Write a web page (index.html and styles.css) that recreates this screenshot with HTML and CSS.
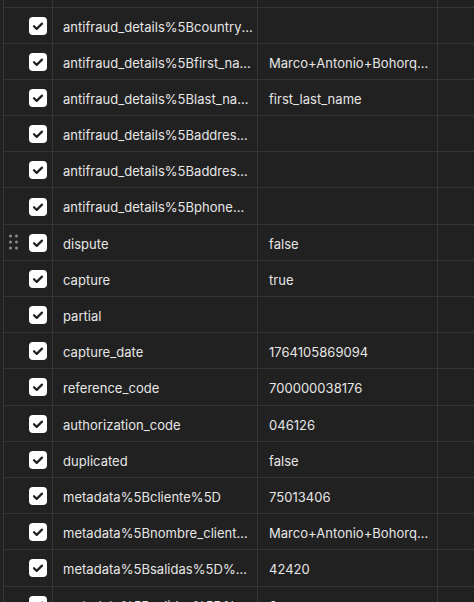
FILE: index.html
```html
<!DOCTYPE html>
<html>
<head>
<meta charset="utf-8">
<link rel="stylesheet" href="styles.css">
</head>
<body>
<div class="viewport">
  <div class="table">
    <div class="row"><div class="cell c-check"><span class="cb"><svg viewBox="0 0 18 18"><path d="M5 9.2l2.7 2.7L13 6.6" /></svg></span></div><div class="cell c-key"></div><div class="cell c-val"></div><div class="cell c-desc"></div></div>
    <div class="row"><div class="cell c-check"><span class="cb"><svg viewBox="0 0 18 18"><path d="M5 9.2l2.7 2.7L13 6.6" /></svg></span></div><div class="cell c-key">antifraud_details%5Bcountry%5D</div><div class="cell c-val"></div><div class="cell c-desc"></div></div>
    <div class="row"><div class="cell c-check"><span class="cb"><svg viewBox="0 0 18 18"><path d="M5 9.2l2.7 2.7L13 6.6" /></svg></span></div><div class="cell c-key">antifraud_details%5Bfirst_name%5D</div><div class="cell c-val">Marco+Antonio+Bohorquez</div><div class="cell c-desc"></div></div>
    <div class="row"><div class="cell c-check"><span class="cb"><svg viewBox="0 0 18 18"><path d="M5 9.2l2.7 2.7L13 6.6" /></svg></span></div><div class="cell c-key">antifraud_details%5Blast_name%5D</div><div class="cell c-val">first_last_name</div><div class="cell c-desc"></div></div>
    <div class="row"><div class="cell c-check"><span class="cb"><svg viewBox="0 0 18 18"><path d="M5 9.2l2.7 2.7L13 6.6" /></svg></span></div><div class="cell c-key">antifraud_details%5Baddress%5D</div><div class="cell c-val"></div><div class="cell c-desc"></div></div>
    <div class="row"><div class="cell c-check"><span class="cb"><svg viewBox="0 0 18 18"><path d="M5 9.2l2.7 2.7L13 6.6" /></svg></span></div><div class="cell c-key">antifraud_details%5Baddress2%5D</div><div class="cell c-val"></div><div class="cell c-desc"></div></div>
    <div class="row"><div class="cell c-check"><span class="cb"><svg viewBox="0 0 18 18"><path d="M5 9.2l2.7 2.7L13 6.6" /></svg></span></div><div class="cell c-key">antifraud_details%5Bphone%5D</div><div class="cell c-val"></div><div class="cell c-desc"></div></div>
    <div class="row"><div class="cell c-check"><span class="drag"><i></i><i></i><i></i><i></i><i></i><i></i></span><span class="cb"><svg viewBox="0 0 18 18"><path d="M5 9.2l2.7 2.7L13 6.6" /></svg></span></div><div class="cell c-key">dispute</div><div class="cell c-val">false</div><div class="cell c-desc"></div></div>
    <div class="row"><div class="cell c-check"><span class="cb"><svg viewBox="0 0 18 18"><path d="M5 9.2l2.7 2.7L13 6.6" /></svg></span></div><div class="cell c-key">capture</div><div class="cell c-val">true</div><div class="cell c-desc"></div></div>
    <div class="row"><div class="cell c-check"><span class="cb"><svg viewBox="0 0 18 18"><path d="M5 9.2l2.7 2.7L13 6.6" /></svg></span></div><div class="cell c-key">partial</div><div class="cell c-val"></div><div class="cell c-desc"></div></div>
    <div class="row"><div class="cell c-check"><span class="cb"><svg viewBox="0 0 18 18"><path d="M5 9.2l2.7 2.7L13 6.6" /></svg></span></div><div class="cell c-key">capture_date</div><div class="cell c-val">1764105869094</div><div class="cell c-desc"></div></div>
    <div class="row"><div class="cell c-check"><span class="cb"><svg viewBox="0 0 18 18"><path d="M5 9.2l2.7 2.7L13 6.6" /></svg></span></div><div class="cell c-key">reference_code</div><div class="cell c-val">700000038176</div><div class="cell c-desc"></div></div>
    <div class="row"><div class="cell c-check"><span class="cb"><svg viewBox="0 0 18 18"><path d="M5 9.2l2.7 2.7L13 6.6" /></svg></span></div><div class="cell c-key">authorization_code</div><div class="cell c-val">046126</div><div class="cell c-desc"></div></div>
    <div class="row"><div class="cell c-check"><span class="cb"><svg viewBox="0 0 18 18"><path d="M5 9.2l2.7 2.7L13 6.6" /></svg></span></div><div class="cell c-key">duplicated</div><div class="cell c-val">false</div><div class="cell c-desc"></div></div>
    <div class="row"><div class="cell c-check"><span class="cb"><svg viewBox="0 0 18 18"><path d="M5 9.2l2.7 2.7L13 6.6" /></svg></span></div><div class="cell c-key">metadata%5Bcliente%5D</div><div class="cell c-val">75013406</div><div class="cell c-desc"></div></div>
    <div class="row"><div class="cell c-check"><span class="cb"><svg viewBox="0 0 18 18"><path d="M5 9.2l2.7 2.7L13 6.6" /></svg></span></div><div class="cell c-key">metadata%5Bnombre_cliente%5D</div><div class="cell c-val">Marco+Antonio+Bohorquez</div><div class="cell c-desc"></div></div>
    <div class="row"><div class="cell c-check"><span class="cb"><svg viewBox="0 0 18 18"><path d="M5 9.2l2.7 2.7L13 6.6" /></svg></span></div><div class="cell c-key">metadata%5Bsalidas%5D%5B0%5D</div><div class="cell c-val">42420</div><div class="cell c-desc"></div></div>
    <div class="row"><div class="cell c-check"><span class="cb"><svg viewBox="0 0 18 18"><path d="M5 9.2l2.7 2.7L13 6.6" /></svg></span></div><div class="cell c-key">metadata%5Bsalidas%5D%5B1%5D</div><div class="cell c-val">6</div><div class="cell c-desc"></div></div>
  </div>
</div>
</body>
</html>
```
FILE: styles.css
```css
html, body {
  margin: 0;
  padding: 0;
  background: #212121;
}
.viewport {
  width: 474px;
  height: 602px;
  overflow: hidden;
  background: #212121;
}
.table {
  margin-top: -28.7px;
  margin-left: 3px;
  width: 560px;
  border-left: 1px solid #353535;
  font-family: Inter, "Noto Sans", sans-serif;
  font-size: 13px;
  color: #e6e6e6;
}
.row {
  display: grid;
  grid-template-columns: 49px 205px 180px 1fr;
  height: 36.2px;
  box-sizing: border-box;
  border-bottom: 1px solid #353535;
}
.cell {
  display: flex;
  align-items: center;
  min-width: 0;
  border-right: 1px solid #353535;
  box-sizing: border-box;
}
.c-check {
  position: relative;
  justify-content: flex-end;
  padding-right: 5px;
  padding-top: 1px;
}
.c-key, .c-val {
  padding: 3px 3px 0 10px;
  white-space: nowrap;
  overflow: hidden;
  text-overflow: ellipsis;
  display: block;
  line-height: 32.2px;
  letter-spacing: 0.03px;
}
.c-val {
  padding-left: 11px;
}
.cb {
  width: 18px;
  height: 18px;
  border-radius: 4px;
  background: #ffffff;
  display: block;
}
.cb svg {
  width: 18px;
  height: 18px;
  display: block;
}
.cb path {
  fill: none;
  stroke: #212121;
  stroke-width: 2.2;
  stroke-linecap: round;
  stroke-linejoin: round;
}
.drag {
  position: absolute;
  left: 5px;
  top: 50%;
  transform: translateY(-50%);
  display: grid;
  grid-template-columns: 3px 3px;
  column-gap: 3px;
  row-gap: 3px;
}
.drag i {
  width: 3px;
  height: 3px;
  border-radius: 50%;
  background: #8a8a8a;
  display: block;
}
```
